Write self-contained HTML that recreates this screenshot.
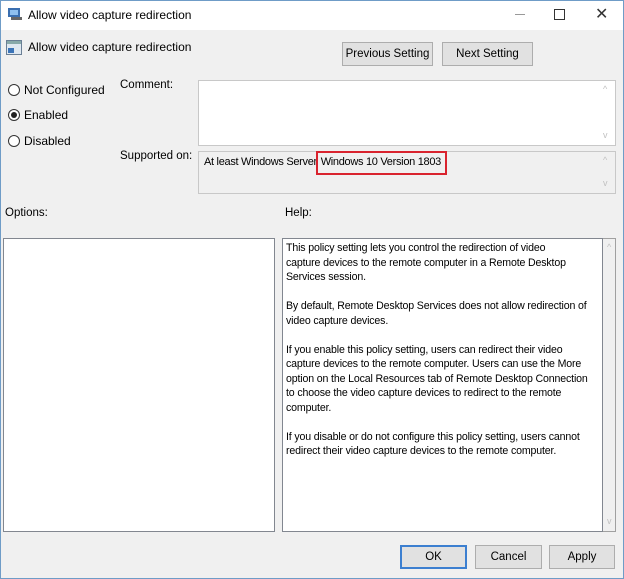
<!DOCTYPE html>
<html><head><style>
*{margin:0;padding:0;box-sizing:border-box}
body{width:624px;height:579px;overflow:hidden;background:#f0f0f0;font-family:"Liberation Sans",sans-serif;font-size:11px;color:#000;position:relative}
.a{position:absolute;white-space:nowrap}
.win{position:absolute;left:0;top:0;width:624px;height:579px;border:1px solid #6f9cc7}
.title{position:absolute;left:1px;top:1px;width:622px;height:29px;background:#fff}
.btn{position:absolute;background:#e1e1e1;border:1px solid #adadad;text-align:center;font-size:11.5px;line-height:22px}
.box{position:absolute;background:#fff;border:1px solid #a9a9a9}
.rad{position:absolute;width:12px;height:12px;border:1px solid #333;border-radius:50%;background:#fff}
.chev{position:absolute;color:#c0c0c0;font-size:9px}
</style></head><body>
<div class="win"></div>
<div class="title"></div>
<svg class="a" style="left:7px;top:7px" width="16" height="14"><rect x="1" y="1" width="12" height="9" fill="#3a6fb0"/><rect x="3" y="3" width="8" height="5" fill="#8fc0ef"/><rect x="4" y="10" width="11" height="3" fill="#666"/></svg>
<div class="a" style="left:28px;top:8px;font-size:12px">Allow video capture redirection</div>
<div class="a" style="left:515px;top:14px;width:10px;height:1px;background:#999"></div>
<div class="a" style="left:554px;top:9px;width:11px;height:11px;border:1px solid #333"></div>
<div class="a" style="left:595px;top:4px;font-size:16px;color:#333">✕</div>
<svg class="a" style="left:6px;top:40px" width="16" height="15"><rect x="0.5" y="0.5" width="15" height="14" fill="#dfe8f1" stroke="#6a7f95"/><rect x="1" y="1" width="14" height="3" fill="#8aa"/><rect x="2" y="8" width="6" height="5" fill="#3b74b8"/></svg>
<div class="a" style="left:28px;top:40px;font-size:12px">Allow video capture redirection</div>
<div class="btn" style="left:342px;top:42px;width:91px;height:24px">Previous Setting</div>
<div class="btn" style="left:442px;top:42px;width:91px;height:24px">Next Setting</div>
<div class="rad" style="left:8px;top:84px"></div>
<div class="a" style="left:24px;top:83px;font-size:12px">Not Configured</div>
<div class="rad" style="left:8px;top:109px"></div><div class="a" style="left:11px;top:112px;width:6px;height:6px;border-radius:50%;background:#222"></div>
<div class="a" style="left:24px;top:108px;font-size:12px">Enabled</div>
<div class="rad" style="left:8px;top:135px"></div>
<div class="a" style="left:24px;top:134px;font-size:12px">Disabled</div>
<div class="a" style="left:120px;top:79px;font-size:11.5px">Comment:</div>
<div class="box" style="left:198px;top:80px;width:418px;height:66px;border-color:#c8c8c8"></div>
<div class="chev" style="left:603px;top:84px">^</div><div class="chev" style="left:603px;top:130px">v</div>
<div class="a" style="left:120px;top:150px;font-size:11.5px">Supported on:</div>
<div class="box" style="left:198px;top:151px;width:418px;height:43px;background:#f0f0f0;border-color:#c8c8c8"></div>
<div class="a" style="left:204px;top:156px;font-size:11px;letter-spacing:-0.3px">At least Windows Server <span style="margin-left:1px">Windows 10 Version 1803</span></div>
<div class="a" style="left:316px;top:151px;width:131px;height:24px;border:2px solid #d9232e"></div>
<div class="chev" style="left:603px;top:155px">^</div><div class="chev" style="left:603px;top:178px">v</div>
<div class="a" style="left:5px;top:207px;font-size:11.5px">Options:</div>
<div class="a" style="left:285px;top:207px;font-size:11.5px">Help:</div>
<div class="box" style="left:3px;top:238px;width:272px;height:294px;border-color:#828790"></div>
<div class="a" style="left:282px;top:238px;width:334px;height:294px;border:1px solid #a0a0a0;background:#f0f0f0"></div>
<div class="box" style="left:282px;top:238px;width:321px;height:294px;border-color:#828790"></div>
<div class="chev" style="left:607px;top:242px">^</div><div class="chev" style="left:607px;top:516px">v</div>
<div class="a" style="left:286px;top:241px;line-height:14.5px;font-size:10.6px;letter-spacing:-0.15px">This policy setting lets you control the redirection of video<br>capture devices to the remote computer in a Remote Desktop<br>Services session.<br><br>By default, Remote Desktop Services does not allow redirection of<br>video capture devices.<br><br>If you enable this policy setting, users can redirect their video<br>capture devices to the remote computer. Users can use the More<br>option on the Local Resources tab of Remote Desktop Connection<br>to choose the video capture devices to redirect to the remote<br>computer.<br><br>If you disable or do not configure this policy setting, users cannot<br>redirect their video capture devices to the remote computer.</div>
<div class="btn" style="left:400px;top:545px;width:67px;height:24px;border:2px solid #3c7fd0;line-height:20px">OK</div>
<div class="btn" style="left:475px;top:545px;width:67px;height:24px">Cancel</div>
<div class="btn" style="left:549px;top:545px;width:66px;height:24px">Apply</div>
</body></html>
